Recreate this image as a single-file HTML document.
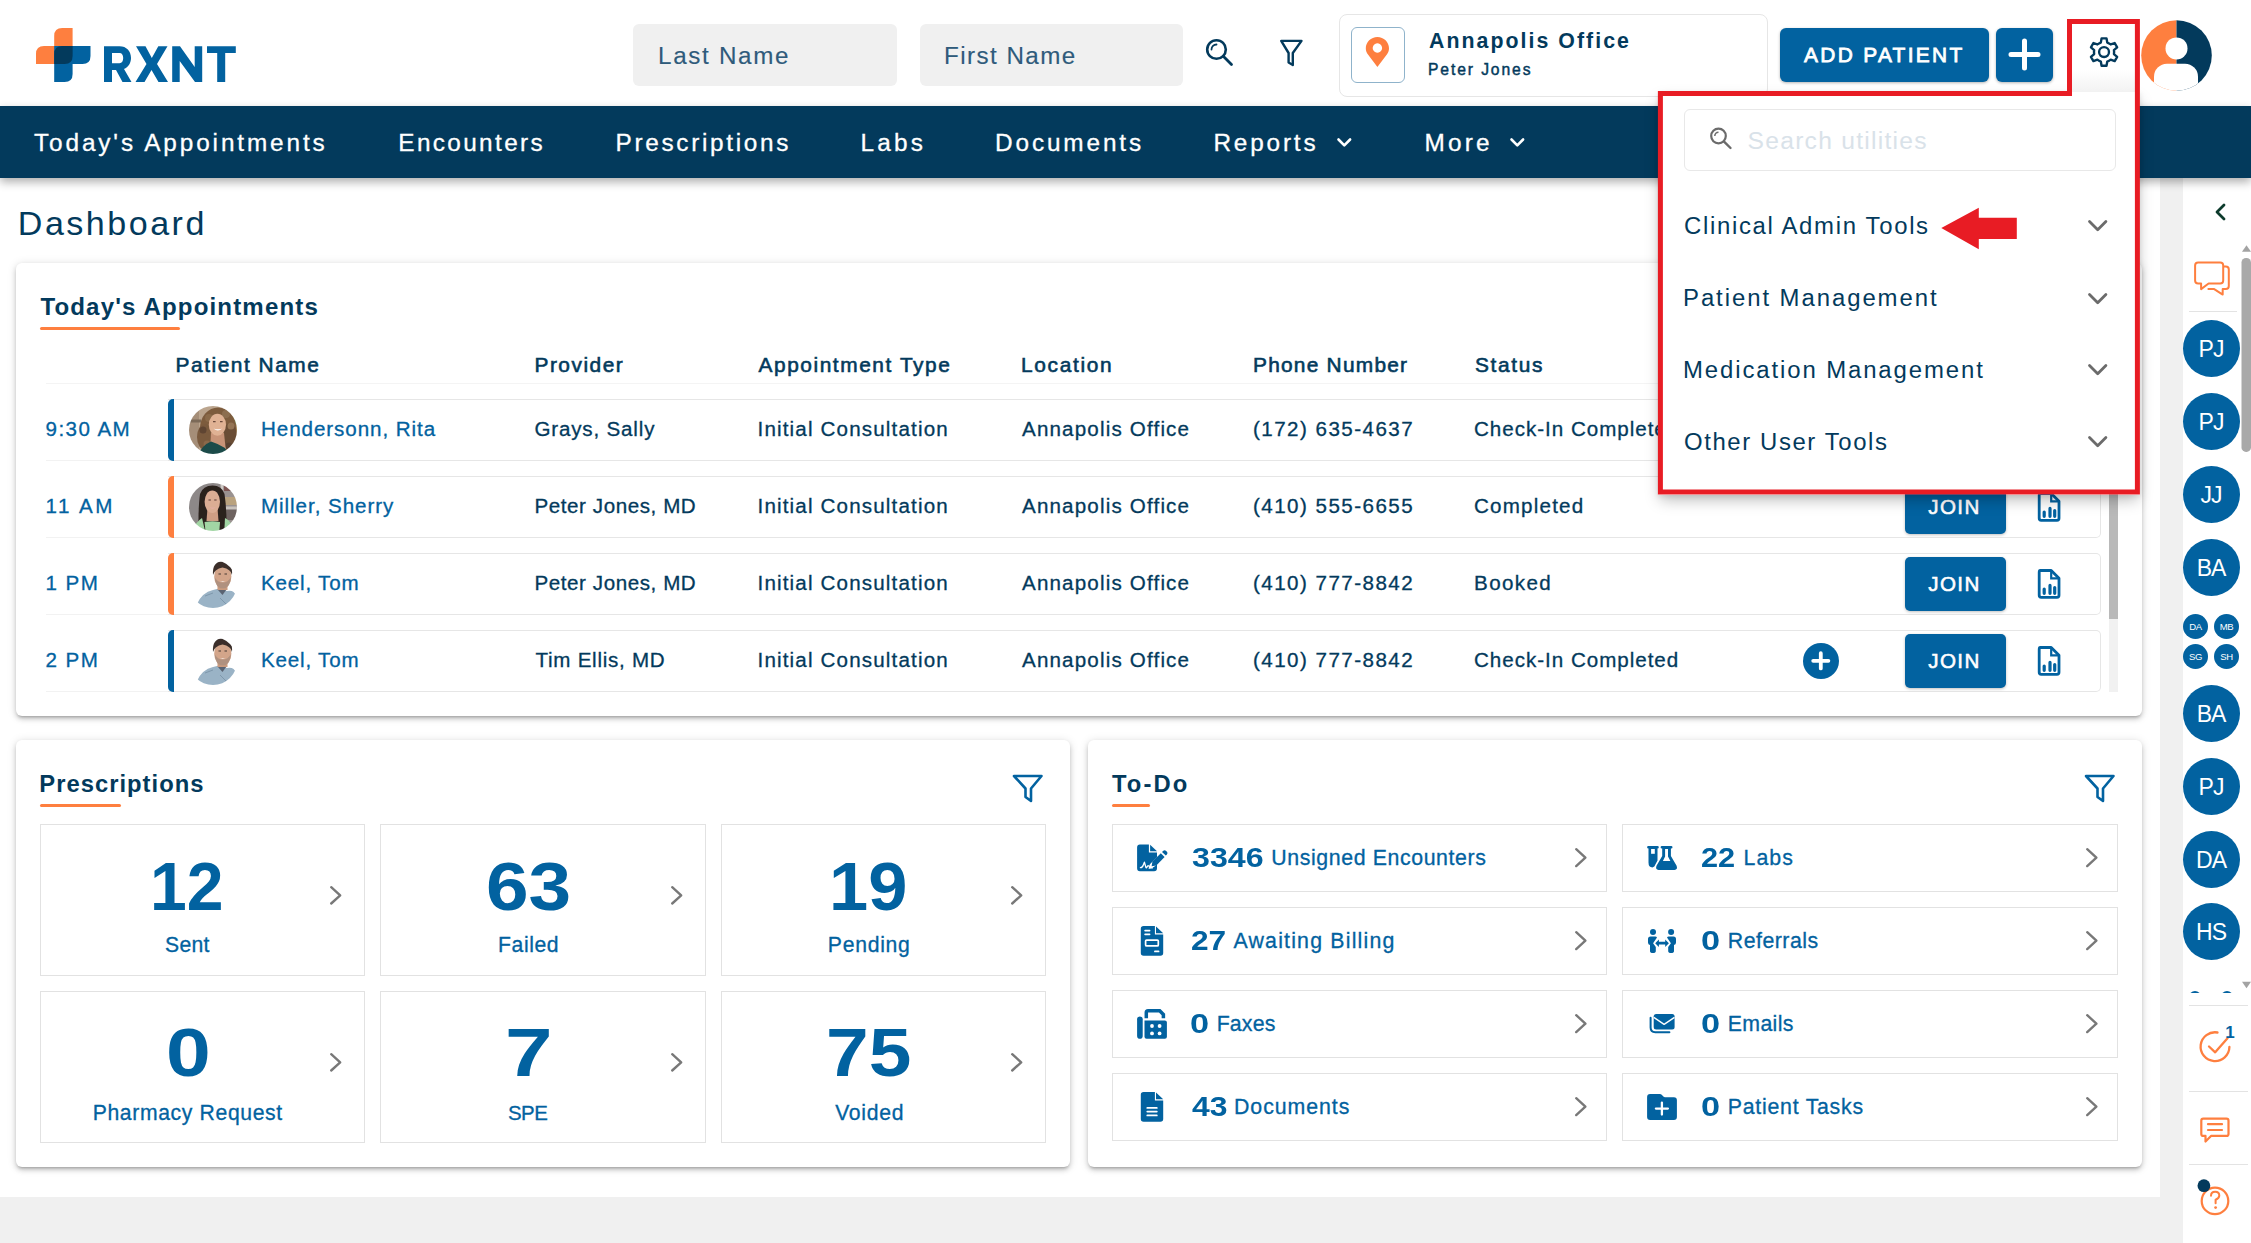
<!DOCTYPE html>
<html><head><meta charset="utf-8"><title>RXNT Dashboard</title>
<style>
*{box-sizing:border-box}
html,body{margin:0;padding:0;width:2251px;height:1243px;overflow:hidden;background:#fff;font-family:"Liberation Sans",sans-serif}
.a{position:absolute}
.t{position:absolute;white-space:pre;line-height:1}
svg{position:absolute;overflow:visible}
.card{position:absolute;background:#fff;border-radius:6px;box-shadow:0 3px 3px -2px rgba(0,0,0,.22),0 3px 5px 0 rgba(0,0,0,.16),0 1px 10px 0 rgba(0,0,0,.13)}
.tile{position:absolute;background:#fff;border:1px solid #e2e2e2}
.row{position:absolute;left:168px;width:1933px;height:62px;border:1px solid #e6e6e6;border-left:none;border-radius:0 5px 5px 0;background:#fff}
.bar{position:absolute;left:168px;width:6px;height:62px;border-radius:5px 0 0 5px}
.join{position:absolute;left:1905px;width:101px;height:53.5px;background:#0262a0;border-radius:5px;box-shadow:0 1px 3px rgba(0,0,0,.25)}
.circ{position:absolute;left:2183px;width:57px;height:57px;border-radius:50%;background:#0262a0;color:#fff;text-align:center;font-size:23px;line-height:58px;letter-spacing:-1px;text-indent:-1px}
.sc{position:absolute;width:25px;height:25px;border-radius:50%;background:#0262a0;color:#fff;text-align:center;font-size:9.5px;line-height:26px;letter-spacing:-0.3px}
.sep{position:absolute;height:1px;background:#e3e3e3}
</style></head><body>
<svg style="left:0;top:0" width="260" height="100" viewBox="0 0 260 100">
<path d="M72.6 28 V64 H36 V54 Q36 46 44 46 H54.2 V36 Q54.2 28 62.2 28 Z" fill="#fe7f3f"/>
<path d="M54.2 46 H90.5 V56 Q90.5 64 82.5 64 H72.6 V74 Q72.6 82 64.6 82 H54.2 Z" fill="#0262a0"/>
<path d="M54.2 54 Q54.2 46 62.2 46 H72.6 V56 Q72.6 64 64.6 64 H54.2 Z" fill="#033a5c"/>
<g fill="#0262a0">
<path fill-rule="evenodd" d="M104 46.2 H119.5 C126.5 46.2 131 51 131 58 C131 63 128.3 67 124 69 L131.5 82 H122.5 L116 70 H112 V82 H104 Z M112 53 V63.2 H119.5 C122 63.2 123.2 61 123.2 58 C123.2 55 122 53 119.5 53 Z"/>
<path d="M136 46.2 H145.5 L151.8 57.9 L158.3 46.2 H167.5 L157 64 L168 82 H158.5 L151.5 70 L144.5 82 H135.5 L146.5 64 Z"/>
<path d="M172.2 46.2 H180 L194.7 67 V46.2 H202.2 V82 H195 L179.7 61 V82 H172.2 Z"/>
<path d="M207 46.2 H235.8 V53 H225.2 V82 H217.2 V53 H207 Z"/>
</g>
</svg>
<div class="a" style="left:633px;top:24px;width:264px;height:62px;background:#f0f0f0;border-radius:6px"></div>
<div class="a" style="left:920px;top:24px;width:263px;height:62px;background:#f0f0f0;border-radius:6px"></div>
<svg style="left:1200px;top:34px" width="40" height="40" viewBox="0 0 40 40">
<circle cx="16.5" cy="15.5" r="9.3" fill="none" stroke="#033a5c" stroke-width="2.6"/>
<path d="M23.3 22.3 L31.5 30.5" stroke="#033a5c" stroke-width="2.8" stroke-linecap="round"/>
<path d="M11.5 15.5 A5 5 0 0 1 16.5 10.5" fill="none" stroke="#033a5c" stroke-width="1.8" stroke-linecap="round"/>
</svg>
<svg style="left:1275px;top:36px" width="34" height="36" viewBox="0 0 34 36">
<path d="M6.2 4.9 H26.5 L17.8 17 V29 L13.6 26.5 V17 Z" fill="none" stroke="#033a5c" stroke-width="2.4" stroke-linejoin="round"/>
</svg>
<div class="a" style="left:1339px;top:14px;width:429px;height:83px;border:1.5px solid #e6e6e6;border-radius:8px;background:#fff"></div>
<div class="a" style="left:1351px;top:27px;width:54px;height:56px;border:1.5px solid #8fb3cb;border-radius:6px"></div>
<svg style="left:1360px;top:32px" width="36" height="40" viewBox="0 0 36 40">
<path d="M17.4 4.9 C23.8 4.9 29 10 29 16.2 C29 18.6 28.3 20.4 27.2 22 L17.4 35 L7.6 22 C6.5 20.4 5.8 18.6 5.8 16.2 C5.8 10 11 4.9 17.4 4.9 Z M17.4 11.3 A4.7 4.7 0 1 0 17.41 11.3 Z" fill="#fe7f3f" fill-rule="evenodd"/>
</svg>
<div class="a" style="left:1780px;top:28px;width:209px;height:54px;background:#0262a0;border-radius:6px;box-shadow:0 1px 3px rgba(0,0,0,.3)"></div>
<div class="a" style="left:1996px;top:28px;width:57px;height:54px;background:#0262a0;border-radius:6px;box-shadow:0 1px 3px rgba(0,0,0,.3)"></div>
<svg style="left:1996px;top:28px" width="57" height="54" viewBox="0 0 57 54"><path d="M15 26.5 H42 M28.5 13 V40" stroke="#fff" stroke-width="5" stroke-linecap="round"/></svg>
<svg style="left:2141px;top:20px" width="71" height="71" viewBox="0 0 71 71">
<defs><clipPath id="avc"><circle cx="35.5" cy="35.5" r="35.3"/></clipPath></defs>
<g clip-path="url(#avc)">
<rect x="0" y="0" width="35.5" height="71" fill="#fe7f3f"/>
<rect x="35.5" y="0" width="36" height="71" fill="#033a5c"/>
<circle cx="35.5" cy="28.4" r="11" fill="#fff"/>
<rect x="13" y="43.8" width="44" height="40" rx="13" fill="#fff"/>
</g></svg>
<div class="a" style="left:2160px;top:178px;width:23px;height:1065px;background:#f0f0f0"></div>
<div class="a" style="left:2183px;top:178px;width:68px;height:1065px;background:#fff"></div>
<div class="a" style="left:0;top:106px;width:2251px;height:72px;background:#033a5c;box-shadow:0 4px 9px rgba(0,0,0,.32)"></div>
<svg style="left:1336.2px;top:136px" width="17" height="13" viewBox="0 0 17 13"><path d="M2.5 3.5 L8.3 9.3 L14.1 3.5" fill="none" stroke="#fff" stroke-width="2.6" stroke-linecap="round" stroke-linejoin="round"/></svg>
<svg style="left:1508.6px;top:136px" width="17" height="13" viewBox="0 0 17 13"><path d="M2.5 3.5 L8.3 9.3 L14.1 3.5" fill="none" stroke="#fff" stroke-width="2.6" stroke-linecap="round" stroke-linejoin="round"/></svg>
<div class="a" style="left:0;top:1197px;width:2160px;height:46px;background:#f0f0f0"></div>
<div class="card" style="left:16px;top:263px;width:2126px;height:453px"></div>
<div class="a" style="left:40px;top:327px;width:140px;height:3px;background:#fe7f3f;border-radius:2px"></div>
<div class="sep" style="left:46px;top:383px;width:2055px;background:#f4f4f4"></div>
<div class="sep" style="left:46px;top:460.0px;width:122px;background:#f2f2f2"></div>
<div class="row" style="top:399.0px"></div>
<div class="bar" style="top:399.0px;background:#0262a0"></div>
<svg style="left:0;top:0" width="2251" height="1243" viewBox="0 0 2251 1243">
<path d="M2040.2 416.5 H2051.2 L2059 424.3 V441.3 Q2059 443.3 2057 443.3 H2041.2 Q2039.2 443.3 2039.2 441.3 V418.5 Q2039.2 416.5 2040.2 416.5 Z" fill="none" stroke="#0262a0" stroke-width="2.8" stroke-linejoin="round"/>
<path d="M2051.2 416.5 V424.3 H2059" fill="none" stroke="#0262a0" stroke-width="2.2"/>
<g stroke="#0262a0" stroke-width="3.2" stroke-linecap="round"><path d="M2044.2 435.0 V439.3 M2050 431.4 V439.3 M2054.7 433.5 V439.3"/></g>
</svg>
<div class="sep" style="left:46px;top:537.0px;width:122px;background:#f2f2f2"></div>
<div class="row" style="top:476.0px"></div>
<div class="bar" style="top:476.0px;background:#fe7f3f"></div>
<div class="join" style="top:480.3px"></div>
<svg style="left:0;top:0" width="2251" height="1243" viewBox="0 0 2251 1243">
<path d="M2040.2 493.5 H2051.2 L2059 501.3 V518.3 Q2059 520.3 2057 520.3 H2041.2 Q2039.2 520.3 2039.2 518.3 V495.5 Q2039.2 493.5 2040.2 493.5 Z" fill="none" stroke="#0262a0" stroke-width="2.8" stroke-linejoin="round"/>
<path d="M2051.2 493.5 V501.3 H2059" fill="none" stroke="#0262a0" stroke-width="2.2"/>
<g stroke="#0262a0" stroke-width="3.2" stroke-linecap="round"><path d="M2044.2 512.0 V516.3 M2050 508.4 V516.3 M2054.7 510.5 V516.3"/></g>
</svg>
<div class="sep" style="left:46px;top:614.0px;width:122px;background:#f2f2f2"></div>
<div class="row" style="top:553.0px"></div>
<div class="bar" style="top:553.0px;background:#fe7f3f"></div>
<div class="join" style="top:557.3px"></div>
<svg style="left:0;top:0" width="2251" height="1243" viewBox="0 0 2251 1243">
<path d="M2040.2 570.5 H2051.2 L2059 578.3 V595.3 Q2059 597.3 2057 597.3 H2041.2 Q2039.2 597.3 2039.2 595.3 V572.5 Q2039.2 570.5 2040.2 570.5 Z" fill="none" stroke="#0262a0" stroke-width="2.8" stroke-linejoin="round"/>
<path d="M2051.2 570.5 V578.3 H2059" fill="none" stroke="#0262a0" stroke-width="2.2"/>
<g stroke="#0262a0" stroke-width="3.2" stroke-linecap="round"><path d="M2044.2 589.0 V593.3 M2050 585.4 V593.3 M2054.7 587.5 V593.3"/></g>
</svg>
<div class="sep" style="left:46px;top:691.0px;width:122px;background:#f2f2f2"></div>
<div class="row" style="top:630.0px"></div>
<div class="bar" style="top:630.0px;background:#0262a0"></div>
<div class="join" style="top:634.3px"></div>
<svg style="left:0;top:0" width="2251" height="1243" viewBox="0 0 2251 1243">
<path d="M2040.2 647.5 H2051.2 L2059 655.3 V672.3 Q2059 674.3 2057 674.3 H2041.2 Q2039.2 674.3 2039.2 672.3 V649.5 Q2039.2 647.5 2040.2 647.5 Z" fill="none" stroke="#0262a0" stroke-width="2.8" stroke-linejoin="round"/>
<path d="M2051.2 647.5 V655.3 H2059" fill="none" stroke="#0262a0" stroke-width="2.2"/>
<g stroke="#0262a0" stroke-width="3.2" stroke-linecap="round"><path d="M2044.2 666.0 V670.3 M2050 662.4 V670.3 M2054.7 664.5 V670.3"/></g>
</svg>
<div class="a" style="left:1802.8px;top:642.8px;width:36px;height:36px;border-radius:50%;background:#0262a0"></div>
<svg style="left:0;top:0" width="2251" height="1243" viewBox="0 0 2251 1243"><path d="M1813.2 660.8 H1828.4 M1820.8 653.2 V668.4" stroke="#fff" stroke-width="3.8" stroke-linecap="round"/></svg>
<div class="a" style="left:2109px;top:384px;width:9px;height:308px;background:#f1f1f1"></div>
<div class="a" style="left:2109px;top:384px;width:9px;height:235px;background:#b9b9b9"></div>
<svg style="left:0;top:0" width="2251" height="1243" viewBox="0 0 2251 1243">
<defs>
<clipPath id="ph1"><circle cx="213" cy="430" r="24"/></clipPath>
<clipPath id="ph2"><circle cx="213" cy="507" r="24"/></clipPath>
<clipPath id="ph3"><circle cx="213" cy="584" r="24"/></clipPath>
<clipPath id="ph4"><circle cx="213" cy="661" r="24"/></clipPath>
<filter id="soft" x="-10%" y="-10%" width="120%" height="120%"><feGaussianBlur stdDeviation="0.7"/></filter>
<linearGradient id="bg1" x1="0" x2="1"><stop offset="0" stop-color="#a88d72"/><stop offset="0.6" stop-color="#9b8460"/><stop offset="1" stop-color="#7d8048"/></linearGradient>
<linearGradient id="bg2" x1="0" x2="1"><stop offset="0" stop-color="#7f7c7c"/><stop offset="0.55" stop-color="#a09a96"/><stop offset="1" stop-color="#c8b9a8"/></linearGradient>
</defs>
<g clip-path="url(#ph1)"><g filter="url(#soft)">
<rect x="185" y="402" width="56" height="56" fill="#bba58e"/>
<rect x="185" y="402" width="14" height="56" fill="#a58e78"/>
<rect x="187" y="419.5" width="14" height="3" fill="#7c6a58"/>
<rect x="226" y="402" width="16" height="56" fill="#9a7a4a"/>
<circle cx="234" cy="420" r="5" fill="#7e8a52"/>
<circle cx="236" cy="438" r="5" fill="#b07a40"/>
<ellipse cx="218" cy="428" rx="18" ry="20.5" fill="#7d5c3e"/>
<ellipse cx="205" cy="437" rx="8" ry="13" fill="#7a5a3e"/>
<ellipse cx="230" cy="437" rx="7" ry="14" fill="#6a4e36"/>
<circle cx="209" cy="418" r="4" fill="#8a6a4a"/><circle cx="226" cy="414" r="4" fill="#8c6e50"/><circle cx="203" cy="430" r="3.5" fill="#5e4430"/><circle cx="231" cy="426" r="3.5" fill="#957554"/><circle cx="207" cy="444" r="3.5" fill="#8a6848"/><circle cx="229" cy="446" r="3.5" fill="#5a4230"/>
<path d="M211 433 L224 433 L226 452 L210 452 Z" fill="#c89478"/>
<ellipse cx="217.4" cy="424.8" rx="8.6" ry="11" fill="#e0b294"/>
<path d="M213 421.6 h2.6 M220 421.6 h2.6" stroke="#6a4a3a" stroke-width="1.3"/>
<path d="M213.6 428.4 Q217.6 432.6 222.4 428.4 Q217.8 430.2 213.6 428.4 Z" fill="#fff"/>
<path d="M196 460 Q200 446 211 441.5 Q219 444 225 448 Q229 453 232 460 Z" fill="#1b4b48"/>
</g></g>
<g clip-path="url(#ph2)"><g filter="url(#soft)">
<rect x="185" y="479" width="56" height="56" fill="#8d8888"/>
<rect x="221" y="479" width="20" height="56" fill="#9a9290"/>
<rect x="224" y="479" width="17" height="12" fill="#7e5552"/>
<rect x="224" y="497" width="17" height="8" fill="#b9a27e"/>
<rect x="221" y="506.5" width="20" height="2.5" fill="#c8c2bc"/>
<rect x="224" y="510" width="17" height="10" fill="#6e6460"/>
<rect x="220.6" y="479" width="2.6" height="40" fill="#cfcac6"/>
<path d="M198.5 535 Q198 508 200 494 Q203 485.5 212.5 485.5 Q222 485.5 224.5 494 Q227 510 226.5 535 Z" fill="#2c201e"/>
<path d="M207.5 508 L217.5 508 L218.5 521 L206.5 521 Z" fill="#cf9e84"/>
<ellipse cx="212.3" cy="501.7" rx="7.7" ry="11.3" fill="#dbad94"/>
<path d="M208.5 500 h2.4 M214.2 500 h2.4" stroke="#5a3a32" stroke-width="1.2"/>
<path d="M209.6 507.2 Q212.6 509.6 215.6 507.2 Q212.6 508.4 209.6 507.2 Z" fill="#e9b0b0"/>
<path d="M190 536 Q195 522 202 518 L206 535 Z" fill="#a2d6a4"/>
<path d="M204.5 522 Q212.5 520.5 220 522 L219 536 L206 536 Z" fill="#a2d6a4"/>
<path d="M225 518 Q232 521 237 536 L224 536 Z" fill="#a2d6a4"/>
</g></g>
<g clip-path="url(#ph3)"><g filter="url(#soft)">
<path d="M197 604 Q202 592.5 213 590 L219 588.5 L227 591 Q234 589.5 236 596 L236 614 L197 614 Z" fill="#9ab3c6"/><path d="M205 596 L213 593 M220 598 L226 604" stroke="#7f98ac" stroke-width="1"/>
<path d="M217.5 589.5 L226.5 589.5 L222.5 595 Z" fill="#5a6472"/>
<rect x="217.5" y="583" width="10" height="7" fill="#c99a7e"/>
<ellipse cx="222.8" cy="576.5" rx="8.6" ry="12" fill="#d3a58a"/>
<path d="M214.5 577 Q215.5 588.5 222.8 588.5 Q230 588.5 231 577 Q228 582.5 222.8 582.5 Q217.5 582.5 214.5 577 Z" fill="#9a8478" opacity="0.6"/>
<path d="M219.5 580.8 Q222.8 583 226 580.8 Q222.8 581.8 219.5 580.8 Z" fill="#fff" opacity="0.85"/><path d="M218.5 574 h2.5 M224.5 574 h2.5" stroke="#4a3a32" stroke-width="1.1"/>
<path d="M213 575 Q212 561.5 222.5 561.5 Q233 561.5 232 575 Q231 569 222.5 567.5 Q214.5 569 213 575 Z" fill="#3a2f2a"/>
</g></g>
<g clip-path="url(#ph4)"><g filter="url(#soft)">
<path d="M197 681 Q202 669.5 213 667 L219 665.5 L227 668 Q234 666.5 236 673 L236 691 L197 691 Z" fill="#9ab3c6"/><path d="M205 673 L213 670 M220 675 L226 681" stroke="#7f98ac" stroke-width="1"/>
<path d="M217.5 666.5 L226.5 666.5 L222.5 672 Z" fill="#5a6472"/>
<rect x="217.5" y="660" width="10" height="7" fill="#c99a7e"/>
<ellipse cx="222.8" cy="653.5" rx="8.6" ry="12" fill="#d3a58a"/>
<path d="M214.5 654 Q215.5 665.5 222.8 665.5 Q230 665.5 231 654 Q228 659.5 222.8 659.5 Q217.5 659.5 214.5 654 Z" fill="#9a8478" opacity="0.6"/>
<path d="M219.5 657.8 Q222.8 660 226 657.8 Q222.8 658.8 219.5 657.8 Z" fill="#fff" opacity="0.85"/><path d="M218.5 651 h2.5 M224.5 651 h2.5" stroke="#4a3a32" stroke-width="1.1"/>
<path d="M213 652 Q212 638.5 222.5 638.5 Q233 638.5 232 652 Q231 646 222.5 644.5 Q214.5 646 213 652 Z" fill="#3a2f2a"/>
</g></g>
</svg>
<div class="card" style="left:16px;top:740px;width:1054px;height:427px"></div>
<div class="a" style="left:40px;top:803.5px;width:81px;height:3.5px;background:#fe7f3f;border-radius:2px"></div>
<svg style="left:1011.5px;top:773.5px" width="32" height="30" viewBox="0 0 32 30"><path d="M2 2 H29.5 L19 14.5 V27 L13.5 23 V14.5 Z" fill="none" stroke="#0262a0" stroke-width="2.6" stroke-linejoin="round"/></svg>
<div class="tile" style="left:40px;top:824px;width:325px;height:152px"></div>
<svg class="a" style="left:329.8px;top:886.1px" width="11.4" height="18.7" viewBox="0 0 11.4 18.7"><path d="M1.20 1.20 L10.20 9.35 L1.20 17.50" fill="none" stroke="#787878" stroke-width="2.4" stroke-linecap="round" stroke-linejoin="round"/></svg>
<div class="tile" style="left:380px;top:824px;width:326px;height:152px"></div>
<svg class="a" style="left:670.8px;top:886.1px" width="11.4" height="18.7" viewBox="0 0 11.4 18.7"><path d="M1.20 1.20 L10.20 9.35 L1.20 17.50" fill="none" stroke="#787878" stroke-width="2.4" stroke-linecap="round" stroke-linejoin="round"/></svg>
<div class="tile" style="left:721px;top:824px;width:325px;height:152px"></div>
<svg class="a" style="left:1010.8px;top:886.1px" width="11.4" height="18.7" viewBox="0 0 11.4 18.7"><path d="M1.20 1.20 L10.20 9.35 L1.20 17.50" fill="none" stroke="#787878" stroke-width="2.4" stroke-linecap="round" stroke-linejoin="round"/></svg>
<div class="tile" style="left:40px;top:991px;width:325px;height:152px"></div>
<svg class="a" style="left:329.8px;top:1053.1px" width="11.4" height="18.7" viewBox="0 0 11.4 18.7"><path d="M1.20 1.20 L10.20 9.35 L1.20 17.50" fill="none" stroke="#787878" stroke-width="2.4" stroke-linecap="round" stroke-linejoin="round"/></svg>
<div class="tile" style="left:380px;top:991px;width:326px;height:152px"></div>
<svg class="a" style="left:670.8px;top:1053.1px" width="11.4" height="18.7" viewBox="0 0 11.4 18.7"><path d="M1.20 1.20 L10.20 9.35 L1.20 17.50" fill="none" stroke="#787878" stroke-width="2.4" stroke-linecap="round" stroke-linejoin="round"/></svg>
<div class="tile" style="left:721px;top:991px;width:325px;height:152px"></div>
<svg class="a" style="left:1010.8px;top:1053.1px" width="11.4" height="18.7" viewBox="0 0 11.4 18.7"><path d="M1.20 1.20 L10.20 9.35 L1.20 17.50" fill="none" stroke="#787878" stroke-width="2.4" stroke-linecap="round" stroke-linejoin="round"/></svg>
<div class="card" style="left:1088px;top:740px;width:1054px;height:427px"></div>
<div class="a" style="left:1112px;top:803.5px;width:38px;height:3.5px;background:#fe7f3f;border-radius:2px"></div>
<svg style="left:2084px;top:773.5px" width="32" height="30" viewBox="0 0 32 30"><path d="M2 2 H29.5 L19 14.5 V27 L13.5 23 V14.5 Z" fill="none" stroke="#0262a0" stroke-width="2.6" stroke-linejoin="round"/></svg>
<div class="tile" style="left:1112px;top:824px;width:495px;height:68px"></div>
<svg class="a" style="left:1574.5px;top:847.9px" width="11.6" height="19.3" viewBox="0 0 11.6 19.3"><path d="M1.20 1.20 L10.40 9.65 L1.20 18.10" fill="none" stroke="#787878" stroke-width="2.4" stroke-linecap="round" stroke-linejoin="round"/></svg>
<div class="tile" style="left:1622px;top:824px;width:496px;height:68px"></div>
<svg class="a" style="left:2085.5px;top:847.9px" width="11.6" height="19.3" viewBox="0 0 11.6 19.3"><path d="M1.20 1.20 L10.40 9.65 L1.20 18.10" fill="none" stroke="#787878" stroke-width="2.4" stroke-linecap="round" stroke-linejoin="round"/></svg>
<div class="tile" style="left:1112px;top:907px;width:495px;height:68px"></div>
<svg class="a" style="left:1574.5px;top:930.9px" width="11.6" height="19.3" viewBox="0 0 11.6 19.3"><path d="M1.20 1.20 L10.40 9.65 L1.20 18.10" fill="none" stroke="#787878" stroke-width="2.4" stroke-linecap="round" stroke-linejoin="round"/></svg>
<div class="tile" style="left:1622px;top:907px;width:496px;height:68px"></div>
<svg class="a" style="left:2085.5px;top:930.9px" width="11.6" height="19.3" viewBox="0 0 11.6 19.3"><path d="M1.20 1.20 L10.40 9.65 L1.20 18.10" fill="none" stroke="#787878" stroke-width="2.4" stroke-linecap="round" stroke-linejoin="round"/></svg>
<div class="tile" style="left:1112px;top:990px;width:495px;height:68px"></div>
<svg class="a" style="left:1574.5px;top:1013.9px" width="11.6" height="19.3" viewBox="0 0 11.6 19.3"><path d="M1.20 1.20 L10.40 9.65 L1.20 18.10" fill="none" stroke="#787878" stroke-width="2.4" stroke-linecap="round" stroke-linejoin="round"/></svg>
<div class="tile" style="left:1622px;top:990px;width:496px;height:68px"></div>
<svg class="a" style="left:2085.5px;top:1013.9px" width="11.6" height="19.3" viewBox="0 0 11.6 19.3"><path d="M1.20 1.20 L10.40 9.65 L1.20 18.10" fill="none" stroke="#787878" stroke-width="2.4" stroke-linecap="round" stroke-linejoin="round"/></svg>
<div class="tile" style="left:1112px;top:1073px;width:495px;height:68px"></div>
<svg class="a" style="left:1574.5px;top:1096.9px" width="11.6" height="19.3" viewBox="0 0 11.6 19.3"><path d="M1.20 1.20 L10.40 9.65 L1.20 18.10" fill="none" stroke="#787878" stroke-width="2.4" stroke-linecap="round" stroke-linejoin="round"/></svg>
<div class="tile" style="left:1622px;top:1073px;width:496px;height:68px"></div>
<svg class="a" style="left:2085.5px;top:1096.9px" width="11.6" height="19.3" viewBox="0 0 11.6 19.3"><path d="M1.20 1.20 L10.40 9.65 L1.20 18.10" fill="none" stroke="#787878" stroke-width="2.4" stroke-linecap="round" stroke-linejoin="round"/></svg>
<svg style="left:0;top:0" width="2251" height="1243" viewBox="0 0 2251 1243"><path d="M1139.9 844.6 H1148.9 V852.4 H1157 V857.2 L1150.6 863.6 Q1149.4 864.8 1149.1 866.5 L1148.6 869 L1151.5 868.2 Q1153 867.8 1154.2 866.8 L1157 864.2 V868.3 Q1157 871.2 1154.1 871.2 H1139.9 Q1137.1 871.2 1137.1 868.3 V847.5 Q1137.1 844.6 1139.9 844.6 Z" fill="#0262a0"/><path d="M1150.1 844.7 L1157 851.2 H1150.1 Z" fill="#0262a0"/><path d="M1151.6 866.2 L1152.5 861.6 L1160.8 853.3 L1164.6 857.1 L1156.3 865.4 Z" fill="#0262a0"/><path d="M1162 852.1 L1163.3 850.8 Q1164.6 849.5 1165.9 850.8 L1166.9 851.8 Q1168.2 853.1 1166.9 854.4 L1165.8 855.5 Z" fill="#0262a0"/><path d="M1140.4 867.6 Q1142.6 867.6 1143.3 865 L1144.4 862.2 L1145.9 867.4 Q1146.5 868.6 1147.4 866.3 Q1148.4 864.9 1149.4 866.9 Q1150.2 868 1152.5 867.9" fill="none" stroke="#fff" stroke-width="1.3" stroke-linecap="round" stroke-linejoin="round"/><path d="M1143.6 926.0 H1154.9 V934.6 H1163.2 V953.0 Q1163.2 955.7 1160.4 955.7 H1143.6 Q1140.8 955.7 1140.8 953.0 V928.8 Q1140.8 926.0 1143.6 926.0 Z" fill="#0262a0"/><path d="M1156 926.4 L1163.2 933.2 H1156 Z" fill="#0262a0"/><g stroke="#fff" stroke-width="1.7" stroke-linecap="round" fill="none"><path d="M1145.1 930.6 H1149.6 M1145.1 934.3 H1149.6 M1154.9 951.4 H1158.6"/><rect x="1145.6" y="940.1" width="12.7" height="5.8" rx="1"/></g><rect x="1137.1" y="1016.4" width="5.6" height="22.3" rx="2.8" fill="#0262a0"/><path d="M1144.5 1020.4 H1164.9 Q1166.9 1020.4 1166.9 1022.4 V1036.7 Q1166.9 1038.7 1164.9 1038.7 H1146.5 Q1144.5 1038.7 1144.5 1036.7 Z" fill="#0262a0"/><path d="M1146.3 1018.3 V1012.6 Q1146.3 1010.8 1148.1 1010.8 H1159.7 L1163.4 1014.5 V1018.3" fill="none" stroke="#0262a0" stroke-width="3.5"/><g fill="#fff"><circle cx="1152" cy="1026" r="1.9"/><circle cx="1159.6" cy="1026" r="1.9"/><circle cx="1152" cy="1033.4" r="1.9"/><circle cx="1159.6" cy="1033.4" r="1.9"/></g><path d="M1143.6 1092.0 H1154.9 V1100.6 H1163.2 V1119.0 Q1163.2 1121.7 1160.4 1121.7 H1143.6 Q1140.8 1121.7 1140.8 1119.0 V1094.8 Q1140.8 1092.0 1143.6 1092.0 Z" fill="#0262a0"/><path d="M1156 1092.4 L1163.2 1099.2 H1156 Z" fill="#0262a0"/><g stroke="#fff" stroke-width="1.8" stroke-linecap="round"><path d="M1147.3 1107.9 H1156.8 M1147.3 1111.6 H1156.8 M1147.3 1115.4 H1156.8"/></g><path d="M1648.4 846 H1657.5 Q1658.8 846 1658.8 847.3 Q1658.8 848.6 1657.5 848.6 V860.5 L1654.3 866.6 Q1653.2 867.4 1652.4 867.4 Q1648.5 867.4 1648.5 862.5 V848.6 Q1647.1 848.6 1647.1 847.3 Q1647.1 846 1648.4 846 Z" fill="#0262a0"/><rect x="1651.1" y="849" width="3.7" height="4.8" fill="#fff"/><path d="M1661.9 846 H1671.2 Q1672.5 846 1672.5 847.3 Q1672.5 848.6 1671.2 848.6 H1670.9 V856 L1676.6 865.8 Q1678 869.9 1674.5 869.9 H1658.6 Q1655.1 869.9 1656.5 865.8 L1662.2 856 V848.6 H1661.9 Q1660.6 848.6 1660.6 847.3 Q1660.6 846 1661.9 846 Z" fill="#0262a0"/><path d="M1665.1 849 H1668 V856.6 L1670.4 860.9 H1662.9 L1665.1 856.6 Z" fill="#fff"/><g fill="#0262a0"><circle cx="1653" cy="931.9" r="3"/><circle cx="1671.1" cy="931.9" r="3"/><path d="M1650.5 936.4 H1655.3 Q1656.5 936.4 1657 937.6 L1653.1 943.2 L1655.8 947 V951 Q1655.8 953 1652.9 953 Q1650 953 1650 951 V945 Q1648 944.5 1648 942.5 V938.9 Q1648 936.4 1650.5 936.4 Z"/><path d="M1673.5 936.4 H1668.7 Q1667.5 936.4 1667 937.6 L1670.9 943.2 L1668.2 947 V951 Q1668.2 953 1671.1 953 Q1674 953 1674 951 V945 Q1676 944.5 1676 942.5 V938.9 Q1676 936.4 1673.5 936.4 Z"/><path d="M1655.2 943.2 L1658.9 939.4 V941.8 H1665.2 V939.4 L1668.9 943.2 L1665.2 947 V944.6 H1658.9 V947 Z"/></g><rect x="1653.7" y="1014" width="20.9" height="15.4" rx="2.5" fill="#0262a0"/><path d="M1653.8 1017.4 L1664.1 1024.4 L1674.5 1017.4" fill="none" stroke="#fff" stroke-width="1.4" stroke-linejoin="round"/><path d="M1650.6 1017.7 V1027.6 Q1650.6 1032.3 1655.3 1032.3 H1669.4" fill="none" stroke="#0262a0" stroke-width="2" stroke-linecap="round"/><path d="M1650.1 1093.9 H1659.6 Q1661.2 1093.9 1662.2 1095.3 Q1663.2 1096.8 1664.8 1097.2 H1673.9 Q1676.9 1097.2 1676.9 1100.2 V1117 Q1676.9 1120 1673.9 1120 H1650.1 Q1647.1 1120 1647.1 1117 V1096.9 Q1647.1 1093.9 1650.1 1093.9 Z" fill="#0262a0"/><path d="M1661.9 1102.6 V1114.6 M1655.9 1108.6 H1667.9" stroke="#fff" stroke-width="2.3" stroke-linecap="round"/></svg>
<svg style="left:2212px;top:202px" width="16" height="20" viewBox="0 0 16 20"><path d="M12 3 L5 10 L12 17" fill="none" stroke="#0d3b2c" stroke-width="2.8" stroke-linecap="round" stroke-linejoin="round"/></svg>
<div class="sep" style="left:2189px;top:311px;width:48px"></div>
<div class="circ" style="top:320px">PJ</div>
<div class="circ" style="top:393px">PJ</div>
<div class="circ" style="top:466px">JJ</div>
<div class="circ" style="top:539px">BA</div>
<div class="circ" style="top:685px">BA</div>
<div class="circ" style="top:758px">PJ</div>
<div class="circ" style="top:831px">DA</div>
<div class="circ" style="top:903px">HS</div>
<div class="sc" style="left:2183px;top:614px">DA</div>
<div class="sc" style="left:2214px;top:614px">MB</div>
<div class="sc" style="left:2183px;top:644px">SG</div>
<div class="sc" style="left:2214px;top:644px">SH</div>
<div class="a" style="left:2183px;top:978px;width:57px;height:14.5px;overflow:hidden"><div class="a" style="left:6px;top:12.5px;width:12px;height:12px;border-radius:50%;background:#0262a0"></div><div class="a" style="left:38px;top:12.5px;width:12px;height:12px;border-radius:50%;background:#0262a0"></div></div>
<svg style="left:0;top:0" width="2251" height="1243" viewBox="0 0 2251 1243"><path d="M2198.1 262.4 H2220.2 Q2223.2 262.4 2223.2 265.4 V280.5 Q2223.2 283.5 2220.2 283.5 H2208.6 L2201.1 289.1 V283.5 H2198.1 Q2195.1 283.5 2195.1 280.5 V265.4 Q2195.1 262.4 2198.1 262.4 Z" fill="#fff" stroke="#fe7f3f" stroke-width="2" stroke-linejoin="round"/><path d="M2223.6 266.6 H2225.8 Q2228.8 266.6 2228.8 269.6 V286.1 Q2228.8 289.1 2225.8 289.1 H2222.7 V294.6 L2214.2 289.1 H2207.6" fill="none" stroke="#fe7f3f" stroke-width="2" stroke-linejoin="round"/><path d="M2242 251.8 L2246.5 245.3 L2251 251.8 Z" fill="#a3a3a3"/><rect x="2241.5" y="257.9" width="9.5" height="194" rx="4.5" fill="#a9a9a9"/><path d="M2242 981.7 H2251 L2246.5 988.2 Z" fill="#a3a3a3"/><path d="M2217.5 1032.5 A14.4 14.4 0 1 0 2229.4 1047" fill="none" stroke="#fe7f3f" stroke-width="2.3" stroke-linecap="round"/><path d="M2209 1046.5 L2215.2 1052.3 L2227.5 1038.2" fill="none" stroke="#fe7f3f" stroke-width="2.3" stroke-linecap="round" stroke-linejoin="round"/><text x="2225.3" y="1038.2" font-family="Liberation Sans" font-weight="700" font-size="17" fill="#0262a0">1</text><path d="M2203.3 1118.7 H2226.5 Q2228.5 1118.7 2228.5 1120.7 V1133.9 Q2228.5 1135.9 2226.5 1135.9 H2211 L2205.5 1141.5 V1135.9 H2203.3 Q2201.3 1135.9 2201.3 1133.9 V1120.7 Q2201.3 1118.7 2203.3 1118.7 Z" fill="none" stroke="#fe7f3f" stroke-width="2.2" stroke-linejoin="round"/><path d="M2208 1124.2 H2222 M2208 1130 H2222" stroke="#fe7f3f" stroke-width="2.2" stroke-linecap="round"/><circle cx="2215" cy="1200.9" r="13.3" fill="none" stroke="#fe7f3f" stroke-width="2.2"/><path d="M2211 1195.8 Q2211 1191.8 2215.2 1191.8 Q2219.3 1191.8 2219.3 1195.6 Q2219.3 1198.3 2215.6 1199.8 V1203.3" fill="none" stroke="#fe7f3f" stroke-width="2" stroke-linecap="round"/><circle cx="2215.6" cy="1207.6" r="1.4" fill="#fe7f3f"/><circle cx="2203.9" cy="1185.7" r="6.4" fill="#033a5c"/></svg>
<div class="sep" style="left:2189px;top:1005px;width:59px"></div>
<div class="sep" style="left:2189px;top:1091px;width:59px"></div>
<div class="sep" style="left:2189px;top:1164px;width:59px"></div>
<div class="t" style="left:658.00px;top:44.10px;font-size:24.20px;color:#2f5b7b;letter-spacing:1.69px;-webkit-text-stroke:0.15px #2f5b7b;">Last Name</div>
<div class="t" style="left:944.00px;top:44.10px;font-size:24.20px;color:#2f5b7b;letter-spacing:1.44px;-webkit-text-stroke:0.15px #2f5b7b;">First Name</div>
<div class="t" style="left:1429.00px;top:31.00px;font-size:21.30px;color:#033a5c;font-weight:700;letter-spacing:2.05px;">Annapolis Office</div>
<div class="t" style="left:1428.00px;top:62.20px;font-size:15.65px;color:#033a5c;letter-spacing:1.90px;-webkit-text-stroke:0.45px #033a5c;">Peter Jones</div>
<div class="t" style="left:1804.00px;top:44.90px;font-size:20.87px;color:#ffffff;letter-spacing:2.34px;-webkit-text-stroke:0.80px #ffffff;">ADD PATIENT</div>
<div class="t" style="left:34.00px;top:131.00px;font-size:24.35px;color:#ffffff;letter-spacing:2.88px;-webkit-text-stroke:0.30px #ffffff;">Today's Appointments</div>
<div class="t" style="left:398.30px;top:131.00px;font-size:24.35px;color:#ffffff;letter-spacing:2.36px;-webkit-text-stroke:0.30px #ffffff;">Encounters</div>
<div class="t" style="left:615.60px;top:131.00px;font-size:24.35px;color:#ffffff;letter-spacing:2.67px;-webkit-text-stroke:0.30px #ffffff;">Prescriptions</div>
<div class="t" style="left:860.50px;top:131.00px;font-size:24.35px;color:#ffffff;letter-spacing:3.17px;-webkit-text-stroke:0.30px #ffffff;">Labs</div>
<div class="t" style="left:995.00px;top:131.00px;font-size:24.35px;color:#ffffff;letter-spacing:2.88px;-webkit-text-stroke:0.30px #ffffff;">Documents</div>
<div class="t" style="left:1213.40px;top:131.00px;font-size:24.35px;color:#ffffff;letter-spacing:2.83px;-webkit-text-stroke:0.30px #ffffff;">Reports</div>
<div class="t" style="left:1424.50px;top:131.00px;font-size:24.35px;color:#ffffff;letter-spacing:3.17px;-webkit-text-stroke:0.30px #ffffff;">More</div>
<div class="t" style="left:17.80px;top:205.90px;font-size:34.06px;color:#033a5c;letter-spacing:2.50px;">Dashboard</div>
<div class="t" style="left:40.40px;top:295.00px;font-size:24.06px;color:#033a5c;font-weight:700;letter-spacing:1.15px;">Today's Appointments</div>
<div class="t" style="left:175.60px;top:354.90px;font-size:20.87px;color:#033a5c;letter-spacing:1.53px;-webkit-text-stroke:0.60px #033a5c;">Patient Name</div>
<div class="t" style="left:534.50px;top:354.90px;font-size:20.87px;color:#033a5c;letter-spacing:1.50px;-webkit-text-stroke:0.60px #033a5c;">Provider</div>
<div class="t" style="left:758.50px;top:354.90px;font-size:20.87px;color:#033a5c;letter-spacing:1.57px;-webkit-text-stroke:0.60px #033a5c;">Appointment Type</div>
<div class="t" style="left:1021.00px;top:354.90px;font-size:20.87px;color:#033a5c;letter-spacing:1.69px;-webkit-text-stroke:0.60px #033a5c;">Location</div>
<div class="t" style="left:1253.00px;top:354.90px;font-size:20.87px;color:#033a5c;letter-spacing:1.25px;-webkit-text-stroke:0.60px #033a5c;">Phone Number</div>
<div class="t" style="left:1475.00px;top:354.90px;font-size:20.87px;color:#033a5c;letter-spacing:1.66px;-webkit-text-stroke:0.60px #033a5c;">Status</div>
<div class="t" style="left:45.50px;top:419.00px;font-size:20.58px;color:#0262a0;letter-spacing:1.45px;-webkit-text-stroke:0.30px #0262a0;">9:30 AM</div>
<div class="t" style="left:261.00px;top:419.00px;font-size:20.58px;color:#0262a0;letter-spacing:0.93px;-webkit-text-stroke:0.30px #0262a0;">Hendersonn, Rita</div>
<div class="t" style="left:534.50px;top:419.00px;font-size:20.58px;color:#033a5c;letter-spacing:0.82px;-webkit-text-stroke:0.30px #033a5c;">Grays, Sally</div>
<div class="t" style="left:757.50px;top:419.00px;font-size:20.58px;color:#033a5c;letter-spacing:1.16px;-webkit-text-stroke:0.30px #033a5c;">Initial Consultation</div>
<div class="t" style="left:1022.00px;top:419.00px;font-size:20.58px;color:#033a5c;letter-spacing:1.17px;-webkit-text-stroke:0.30px #033a5c;">Annapolis Office</div>
<div class="t" style="left:1253.00px;top:419.00px;font-size:20.58px;color:#033a5c;letter-spacing:1.46px;-webkit-text-stroke:0.30px #033a5c;">(172) 635-4637</div>
<div class="t" style="left:1474.00px;top:419.00px;font-size:20.58px;color:#033a5c;letter-spacing:0.98px;-webkit-text-stroke:0.30px #033a5c;">Check-In Completed</div>
<div class="t" style="left:45.50px;top:496.00px;font-size:20.58px;color:#0262a0;letter-spacing:2.50px;-webkit-text-stroke:0.30px #0262a0;">11 AM</div>
<div class="t" style="left:261.00px;top:496.00px;font-size:20.58px;color:#0262a0;letter-spacing:0.94px;-webkit-text-stroke:0.30px #0262a0;">Miller, Sherry</div>
<div class="t" style="left:534.50px;top:496.00px;font-size:20.58px;color:#033a5c;letter-spacing:0.57px;-webkit-text-stroke:0.30px #033a5c;">Peter Jones, MD</div>
<div class="t" style="left:757.50px;top:496.00px;font-size:20.58px;color:#033a5c;letter-spacing:1.16px;-webkit-text-stroke:0.30px #033a5c;">Initial Consultation</div>
<div class="t" style="left:1022.00px;top:496.00px;font-size:20.58px;color:#033a5c;letter-spacing:1.17px;-webkit-text-stroke:0.30px #033a5c;">Annapolis Office</div>
<div class="t" style="left:1253.00px;top:496.00px;font-size:20.58px;color:#033a5c;letter-spacing:1.46px;-webkit-text-stroke:0.30px #033a5c;">(410) 555-6655</div>
<div class="t" style="left:1474.00px;top:496.00px;font-size:20.58px;color:#033a5c;letter-spacing:1.21px;-webkit-text-stroke:0.30px #033a5c;">Completed</div>
<div class="t" style="left:1928.20px;top:496.90px;font-size:20.58px;color:#ffffff;letter-spacing:1.40px;-webkit-text-stroke:0.55px #ffffff;">JOIN</div>
<div class="t" style="left:45.50px;top:573.00px;font-size:20.58px;color:#0262a0;letter-spacing:1.47px;-webkit-text-stroke:0.30px #0262a0;">1 PM</div>
<div class="t" style="left:261.00px;top:573.00px;font-size:20.58px;color:#0262a0;letter-spacing:0.81px;-webkit-text-stroke:0.30px #0262a0;">Keel, Tom</div>
<div class="t" style="left:534.50px;top:573.00px;font-size:20.58px;color:#033a5c;letter-spacing:0.57px;-webkit-text-stroke:0.30px #033a5c;">Peter Jones, MD</div>
<div class="t" style="left:757.50px;top:573.00px;font-size:20.58px;color:#033a5c;letter-spacing:1.16px;-webkit-text-stroke:0.30px #033a5c;">Initial Consultation</div>
<div class="t" style="left:1022.00px;top:573.00px;font-size:20.58px;color:#033a5c;letter-spacing:1.17px;-webkit-text-stroke:0.30px #033a5c;">Annapolis Office</div>
<div class="t" style="left:1253.00px;top:573.00px;font-size:20.58px;color:#033a5c;letter-spacing:1.46px;-webkit-text-stroke:0.30px #033a5c;">(410) 777-8842</div>
<div class="t" style="left:1474.00px;top:573.00px;font-size:20.58px;color:#033a5c;letter-spacing:1.40px;-webkit-text-stroke:0.30px #033a5c;">Booked</div>
<div class="t" style="left:1928.20px;top:573.90px;font-size:20.58px;color:#ffffff;letter-spacing:1.40px;-webkit-text-stroke:0.55px #ffffff;">JOIN</div>
<div class="t" style="left:45.50px;top:650.00px;font-size:20.58px;color:#0262a0;letter-spacing:1.47px;-webkit-text-stroke:0.30px #0262a0;">2 PM</div>
<div class="t" style="left:261.00px;top:650.00px;font-size:20.58px;color:#0262a0;letter-spacing:0.81px;-webkit-text-stroke:0.30px #0262a0;">Keel, Tom</div>
<div class="t" style="left:535.50px;top:650.00px;font-size:20.58px;color:#033a5c;letter-spacing:0.73px;-webkit-text-stroke:0.30px #033a5c;">Tim Ellis, MD</div>
<div class="t" style="left:757.50px;top:650.00px;font-size:20.58px;color:#033a5c;letter-spacing:1.16px;-webkit-text-stroke:0.30px #033a5c;">Initial Consultation</div>
<div class="t" style="left:1022.00px;top:650.00px;font-size:20.58px;color:#033a5c;letter-spacing:1.17px;-webkit-text-stroke:0.30px #033a5c;">Annapolis Office</div>
<div class="t" style="left:1253.00px;top:650.00px;font-size:20.58px;color:#033a5c;letter-spacing:1.46px;-webkit-text-stroke:0.30px #033a5c;">(410) 777-8842</div>
<div class="t" style="left:1474.00px;top:650.00px;font-size:20.58px;color:#033a5c;letter-spacing:0.98px;-webkit-text-stroke:0.30px #033a5c;">Check-In Completed</div>
<div class="t" style="left:1928.20px;top:650.90px;font-size:20.58px;color:#ffffff;letter-spacing:1.40px;-webkit-text-stroke:0.55px #ffffff;">JOIN</div>
<div class="t" style="left:39.30px;top:771.90px;font-size:23.77px;color:#033a5c;font-weight:700;letter-spacing:1.02px;">Prescriptions</div>
<div class="t" style="left:1112.00px;top:771.90px;font-size:23.77px;color:#033a5c;font-weight:700;letter-spacing:2.12px;">To-Do</div>
<div class="t" style="left:150.34px;top:851.80px;font-size:68.41px;color:#0262a0;font-weight:700;transform:scaleX(0.966);transform-origin:0 0;">12</div>
<div class="t" style="left:165.05px;top:934.10px;font-size:21.16px;color:#0262a0;letter-spacing:0.30px;-webkit-text-stroke:0.30px #0262a0;">Sent</div>
<div class="t" style="left:485.96px;top:851.80px;font-size:68.41px;color:#0262a0;font-weight:700;transform:scaleX(1.119);transform-origin:0 0;">63</div>
<div class="t" style="left:498.00px;top:934.10px;font-size:21.16px;color:#0262a0;letter-spacing:0.60px;-webkit-text-stroke:0.30px #0262a0;">Failed</div>
<div class="t" style="left:828.89px;top:851.80px;font-size:68.41px;color:#0262a0;font-weight:700;transform:scaleX(1.029);transform-origin:0 0;">19</div>
<div class="t" style="left:827.85px;top:934.10px;font-size:21.16px;color:#0262a0;letter-spacing:0.72px;-webkit-text-stroke:0.30px #0262a0;">Pending</div>
<div class="t" style="left:165.65px;top:1017.80px;font-size:68.41px;color:#0262a0;font-weight:700;transform:scaleX(1.176);transform-origin:0 0;">0</div>
<div class="t" style="left:92.70px;top:1101.50px;font-size:21.16px;color:#0262a0;letter-spacing:0.64px;-webkit-text-stroke:0.30px #0262a0;">Pharmacy Request</div>
<div class="t" style="left:504.75px;top:1017.80px;font-size:68.41px;color:#0262a0;font-weight:700;transform:scaleX(1.250);transform-origin:0 0;">7</div>
<div class="t" style="left:508.00px;top:1102.50px;font-size:20.43px;color:#0262a0;letter-spacing:-0.50px;-webkit-text-stroke:0.30px #0262a0;">SPE</div>
<div class="t" style="left:825.84px;top:1017.80px;font-size:68.41px;color:#0262a0;font-weight:700;transform:scaleX(1.121);transform-origin:0 0;">75</div>
<div class="t" style="left:835.20px;top:1101.50px;font-size:21.16px;color:#0262a0;letter-spacing:0.72px;-webkit-text-stroke:0.30px #0262a0;">Voided</div>
<div class="t" style="left:1191.70px;top:843.40px;font-size:28.26px;color:#0262a0;font-weight:700;transform:scaleX(1.139);transform-origin:0 0;">3346</div>
<div class="t" style="left:1271.30px;top:848.20px;font-size:21.30px;color:#0262a0;letter-spacing:0.61px;-webkit-text-stroke:0.30px #0262a0;">Unsigned Encounters</div>
<div class="t" style="left:1701.31px;top:843.40px;font-size:28.26px;color:#0262a0;font-weight:700;transform:scaleX(1.087);transform-origin:0 0;">22</div>
<div class="t" style="left:1743.60px;top:848.20px;font-size:21.30px;color:#0262a0;letter-spacing:1.00px;-webkit-text-stroke:0.30px #0262a0;">Labs</div>
<div class="t" style="left:1190.58px;top:926.40px;font-size:28.26px;color:#0262a0;font-weight:700;transform:scaleX(1.120);transform-origin:0 0;">27</div>
<div class="t" style="left:1233.50px;top:931.20px;font-size:21.30px;color:#0262a0;letter-spacing:1.20px;-webkit-text-stroke:0.30px #0262a0;">Awaiting Billing</div>
<div class="t" style="left:1701.19px;top:926.40px;font-size:28.26px;color:#0262a0;font-weight:700;transform:scaleX(1.214);transform-origin:0 0;">0</div>
<div class="t" style="left:1727.80px;top:931.20px;font-size:21.30px;color:#0262a0;letter-spacing:0.50px;-webkit-text-stroke:0.30px #0262a0;">Referrals</div>
<div class="t" style="left:1190.49px;top:1009.40px;font-size:28.26px;color:#0262a0;font-weight:700;transform:scaleX(1.214);transform-origin:0 0;">0</div>
<div class="t" style="left:1216.70px;top:1014.20px;font-size:21.30px;color:#0262a0;letter-spacing:0.15px;-webkit-text-stroke:0.30px #0262a0;">Faxes</div>
<div class="t" style="left:1701.19px;top:1009.40px;font-size:28.26px;color:#0262a0;font-weight:700;transform:scaleX(1.214);transform-origin:0 0;">0</div>
<div class="t" style="left:1727.80px;top:1014.20px;font-size:21.30px;color:#0262a0;letter-spacing:0.34px;-webkit-text-stroke:0.30px #0262a0;">Emails</div>
<div class="t" style="left:1191.70px;top:1092.40px;font-size:28.26px;color:#0262a0;font-weight:700;transform:scaleX(1.129);transform-origin:0 0;">43</div>
<div class="t" style="left:1234.00px;top:1097.20px;font-size:21.30px;color:#0262a0;letter-spacing:0.96px;-webkit-text-stroke:0.30px #0262a0;">Documents</div>
<div class="t" style="left:1701.19px;top:1092.40px;font-size:28.26px;color:#0262a0;font-weight:700;transform:scaleX(1.214);transform-origin:0 0;">0</div>
<div class="t" style="left:1727.80px;top:1097.20px;font-size:21.30px;color:#0262a0;letter-spacing:0.75px;-webkit-text-stroke:0.30px #0262a0;">Patient Tasks</div>
<div class="a" style="left:1658px;top:91px;width:482px;height:404px;box-shadow:0 7px 14px -2px rgba(0,0,0,.26),0 2px 5px rgba(0,0,0,.08)"></div>
<svg style="left:1640px;top:0px" width="520" height="520" viewBox="1640 0 520 520">
<path d="M1660.4 93.5 H2069.5 V21.5 H2137.4 V491.9 H1660.4 Z" fill="#fff"/>
</svg>
<div class="a" style="left:2072px;top:70px;width:63px;height:22px;background:linear-gradient(#fff,#f2f2f2)"></div>
<svg style="left:2085.9px;top:33.9px" width="36.1" height="36.1" viewBox="0 0 38 38">
<path d="M16.4 4.6 H21.6 L22.4 9 Q24.4 9.7 26 11 L30.2 9.5 L32.8 14 L29.4 16.9 Q29.8 19 29.4 21.1 L32.8 24 L30.2 28.5 L26 27 Q24.4 28.3 22.4 29 L21.6 33.4 H16.4 L15.6 29 Q13.6 28.3 12 27 L7.8 28.5 L5.2 24 L8.6 21.1 Q8.2 19 8.6 16.9 L5.2 14 L7.8 9.5 L12 11 Q13.6 9.7 15.6 9 Z" fill="none" stroke="#033a5c" stroke-width="2.5" stroke-linejoin="round"/>
<circle cx="19" cy="19" r="5.2" fill="none" stroke="#033a5c" stroke-width="2.5"/>
</svg>
<svg style="left:1640px;top:0px" width="520" height="520" viewBox="1640 0 520 520">
<path d="M1660.4 93.5 H2069.5 V21.5 H2137.4 V491.9 H1660.4 Z" fill="none" stroke="#e81c24" stroke-width="5"/>
<path d="M1941.3 228 L1978.8 207.7 V217.7 H2016.8 V238.9 H1978.8 V249.2 Z" fill="#e81c24"/>
</svg>
<div class="a" style="left:1684px;top:109px;width:432px;height:62px;border:1px solid #e8e8e8;border-radius:6px;background:#fff"></div>
<svg style="left:1706px;top:124px" width="30" height="30" viewBox="0 0 30 30">
<circle cx="12.5" cy="12" r="7.3" fill="none" stroke="#6b6b6b" stroke-width="2.2"/>
<path d="M17.8 17.3 L24.5 24" stroke="#6b6b6b" stroke-width="2.4" stroke-linecap="round"/>
<path d="M8.8 12 A3.8 3.8 0 0 1 12.5 8.2" fill="none" stroke="#6b6b6b" stroke-width="1.5"/>
</svg>
<svg style="left:2086px;top:218.0px" width="24" height="16" viewBox="0 0 24 16"><path d="M3.5 3.5 L11.7 11.7 L19.9 3.5" fill="none" stroke="#6b6b6b" stroke-width="2.8" stroke-linecap="round" stroke-linejoin="round"/></svg>
<svg style="left:2086px;top:290.5px" width="24" height="16" viewBox="0 0 24 16"><path d="M3.5 3.5 L11.7 11.7 L19.9 3.5" fill="none" stroke="#6b6b6b" stroke-width="2.8" stroke-linecap="round" stroke-linejoin="round"/></svg>
<svg style="left:2086px;top:362.4px" width="24" height="16" viewBox="0 0 24 16"><path d="M3.5 3.5 L11.7 11.7 L19.9 3.5" fill="none" stroke="#6b6b6b" stroke-width="2.8" stroke-linecap="round" stroke-linejoin="round"/></svg>
<svg style="left:2086px;top:434.4px" width="24" height="16" viewBox="0 0 24 16"><path d="M3.5 3.5 L11.7 11.7 L19.9 3.5" fill="none" stroke="#6b6b6b" stroke-width="2.8" stroke-linecap="round" stroke-linejoin="round"/></svg>
<div class="t" style="left:1747.60px;top:129.20px;font-size:24.64px;color:#d9e2e9;letter-spacing:1.25px;">Search utilities</div>
<div class="t" style="left:1684.00px;top:213.90px;font-size:23.91px;color:#033a5c;letter-spacing:1.68px;">Clinical Admin Tools</div>
<div class="t" style="left:1683.00px;top:286.20px;font-size:23.91px;color:#033a5c;letter-spacing:1.94px;">Patient Management</div>
<div class="t" style="left:1683.00px;top:358.10px;font-size:23.91px;color:#033a5c;letter-spacing:1.90px;">Medication Management</div>
<div class="t" style="left:1684.00px;top:430.10px;font-size:23.91px;color:#033a5c;letter-spacing:1.60px;">Other User Tools</div>
</body></html>
